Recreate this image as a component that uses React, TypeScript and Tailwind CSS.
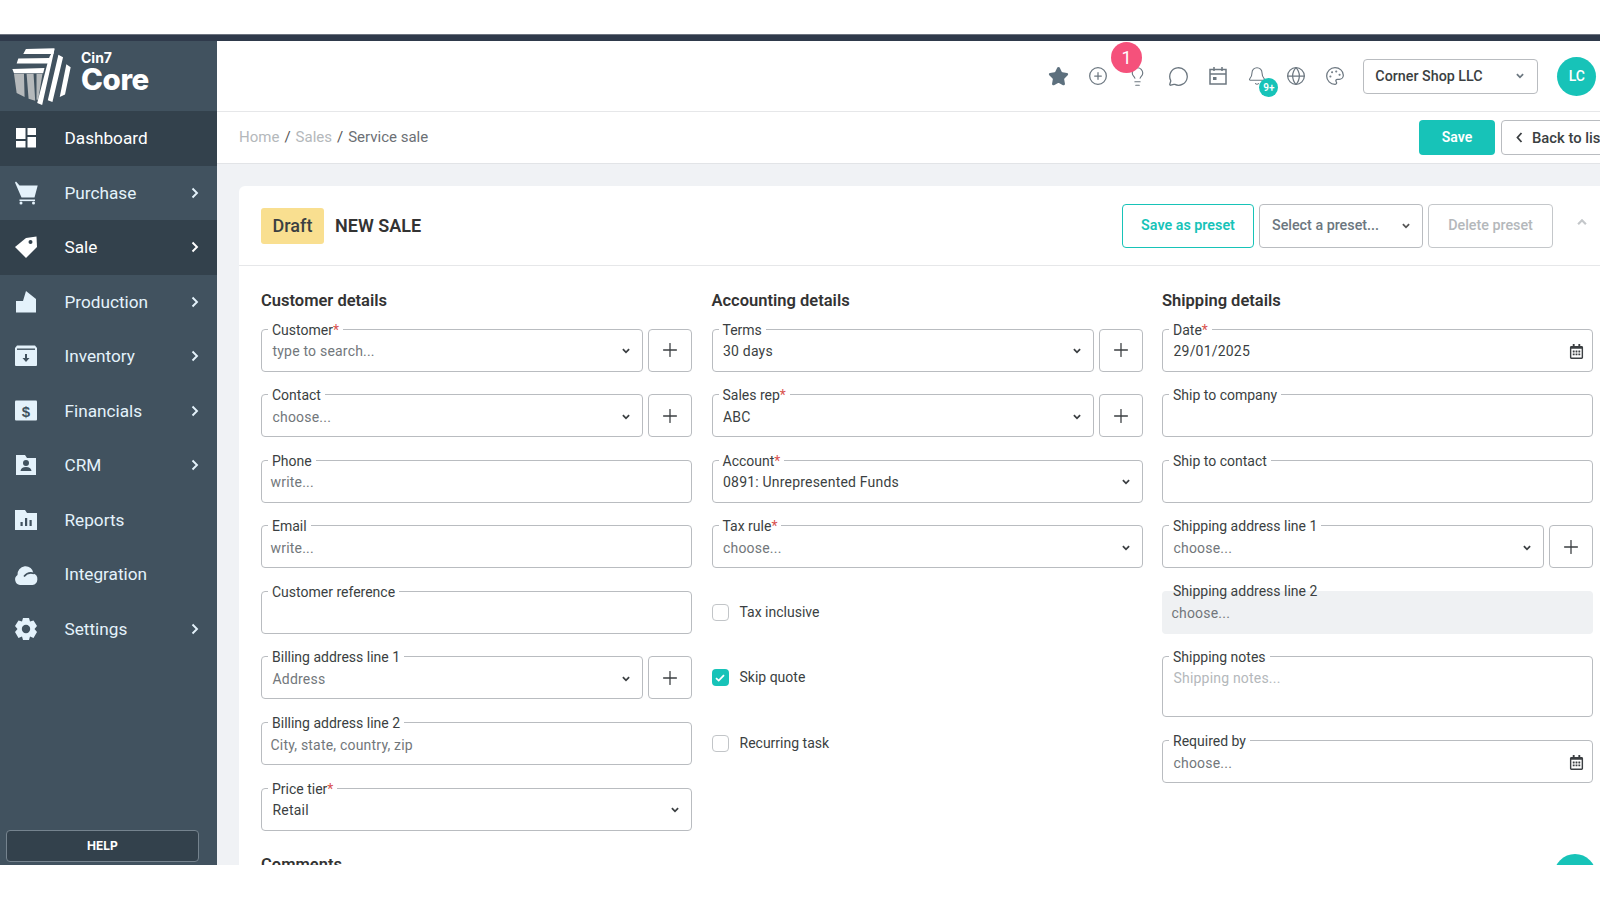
import React from "react";
import { Star, CirclePlus, Lightbulb, MessageCircle, Bell, Globe, Palette, Plus } from "lucide-react";
import { FaRegCalendarAlt } from "react-icons/fa";

const Chev = ({ className = "" }: { className?: string }) => (
  <svg width="8" height="6" viewBox="0 0 9 6" className={className}><polyline points="1,1 4.5,4.5 8,1" fill="none" stroke="currentColor" strokeWidth="2" /></svg>
);

const L = "#e4f2fb";
const D = "#41525f";
const icons: Record<string, React.ReactNode> = {
  Dashboard: (<g fill="#fff"><rect x="2" y="2" width="9.5" height="11" /><rect x="2" y="15" width="9.5" height="6.5" /><rect x="13.5" y="2" width="8.5" height="7" /><rect x="13.5" y="11" width="8.5" height="10.5" /></g>),
  Purchase: (<g fill={L}><path d="M1 1.5 L2 0.5 L5.5 4.5 H23.7 L20.5 16.5 H7.5 Z" /><rect x="5.5" y="18.5" width="15.5" height="1.6" /><circle cx="7" cy="22" r="1.5" /><circle cx="19.5" cy="22" r="1.5" /></g>),
  Sale: (<g><path d="M1 12 L12 3 L22.5 1.5 L23 12 L12 23 Z" fill="#fff" /><circle cx="16.5" cy="7" r="2" fill="#33414c" /></g>),
  Production: (<path d="M2 22.5 V11 H9 L12 1 L22 9 V22.5 Z" fill={L} />),
  Inventory: (<g><path d="M3 1.5 H21 L23 4 V21 Q23 22 22 22 H2 Q1 22 1 21 V4 Z" fill={L} /><rect x="3" y="4.5" width="18" height="1.4" fill={D} /><path d="M11 10 H13 V14 H15.5 L12 18 L8.5 14 H11 Z" fill={D} /></g>),
  Financials: (<g><rect x="1" y="1.5" width="22" height="20" rx="1" fill={L} /><text x="12" y="17.5" textAnchor="middle" fontSize="15" fontWeight="700" fill={D} fontFamily="'Liberation Sans', sans-serif">$</text></g>),
  CRM: (<g><path d="M2 2 H11 L13 5 H22 V22 H2 Z" fill={L} /><circle cx="12" cy="10" r="3" fill={D} /><path d="M6.5 18 Q7 14 12 14 Q17 14 17.5 18 Z" fill={D} /></g>),
  Reports: (<g><path d="M1 2 H11 L13 5 H23 V22 H1 Z" fill={L} /><rect x="6.5" y="14" width="2.2" height="4" fill={D} /><rect x="11" y="10" width="2.2" height="8" fill={D} /><rect x="15.5" y="12" width="2.2" height="6" fill={D} /></g>),
  Integration: (<g><path d="M6 23 A5.5 5.5 0 0 1 3.5 13 A8 8 0 0 1 19.5 11.5 A6 6 0 0 1 18.5 23 Z" fill={L} /><path d="M10 14.5 Q14 9.5 20 11.5" fill="none" stroke={D} strokeWidth="1.6" /></g>),
  Settings: (<g><path d="M9 1 H15 L16 4.5 L19.5 3.5 L23 9 L20.5 12 L23 15 L19.5 21 L16 19.5 L15 23 H9 L8 19.5 L4.5 21 L1 15 L3.5 12 L1 9 L4.5 3.5 L8 4.5 Z" fill={L} strokeLinejoin="round" /><circle cx="12" cy="12" r="4.2" fill={D} /></g>),
};

const nav: [string, boolean][] = [
  ["Dashboard", false], ["Purchase", true], ["Sale", true], ["Production", true], ["Inventory", true],
  ["Financials", true], ["CRM", true], ["Reports", false], ["Integration", false], ["Settings", true],
];

function Field({ label, req, value, ph, select, plus, cal, muted, h, faint, filled }: {
  label: string; req?: boolean; value?: string; ph?: string; select?: boolean; plus?: boolean; cal?: boolean; muted?: boolean; h?: string; faint?: boolean; filled?: boolean;
}) {
  return (
    <div className={`flex gap-[5px] ${h ?? "h-[43px]"}`}>
      <div className={`relative flex-1 rounded-[4px] flex ${filled ? "bg-[#eff1f3] pl-[9.5px]" : "border border-[#b9bcc0]"} ${h ? "items-start pt-[12px]" : "items-center pt-[2px]"} ${select || cal || h ? "pl-[10.5px]" : filled ? "" : "pl-[8.5px]"} ${cal ? "pr-[9px]" : "pr-[11px]"}`}>
        <span className={`absolute -top-[9px] ${filled ? "left-[7px]" : "left-[6px] bg-white"} px-[4px] text-[14px] leading-[18px] text-[#3b3f42] whitespace-nowrap`}>
          {label}{req && <span className="text-[#d9534f]">*</span>}
        </span>
        <span className={`flex-1 text-[14px] leading-[18px] ${faint ? "text-[#b4b8bb]" : muted ? "text-[#72777b]" : "text-[#3b3f42]"} tracking-[0.2px]`}>{value ?? ph}</span>
        {select && <Chev className="text-[#3b3f42] mr-[1px]" />}
        {cal && <FaRegCalendarAlt size={15} className="text-[#3b3f42] -mr-[1px]" />}
      </div>
      {plus && (
        <div className="w-[44px] border border-[#b9bcc0] rounded-[4px] flex items-center justify-center text-[#3b3f42]">
          <Plus size={22} strokeWidth={1.4} />
        </div>
      )}
    </div>
  );
}

function Check({ label, on }: { label: string; on?: boolean }) {
  return (
    <div className="h-[43px] flex items-center gap-[11px]">
      <div className={`w-[17px] h-[17px] rounded-[4px] flex items-center justify-center ${on ? "bg-[#17c3b8]" : "border border-[#c2c5c8]"}`}>
        {on && <svg width="10" height="8" viewBox="0 0 10 8"><polyline points="1,4.2 3.7,6.6 9,1.2" fill="none" stroke="#fff" strokeWidth="1.8" /></svg>}
      </div>
      <span className="text-[14px] text-[#3b3f42]">{label}</span>
    </div>
  );
}

const H = ({ children }: { children: React.ReactNode }) => (
  <div className="text-[16.5px] leading-[20px] font-semibold text-[#333] mb-[18px]">{children}</div>
);

export default function App() {
  return (
    <div className="w-[1600px] h-[900px] overflow-hidden bg-white font-['Roboto',sans-serif]">
      <div className="h-[34px]" />
      <div className="h-[7px] bg-[#2f3a4b] border-t border-[#6d7480]" />
      <div className="h-[824px] flex">
        <aside className="w-[217px] shrink-0 bg-[#41525f] flex flex-col">
          <div className="h-[70px] shrink-0 flex items-center pl-[12px] gap-[10px]">
            <svg width="59" height="57" viewBox="36 140 178 172">
              <path d="M78 143 L164 141 L161 158 L70 158Z M55 172 L149 170 L145 187 L50 187Z M37 203 L134 200 L130 216 L42 216Z" fill="#fff" />
              <path d="M42 218 L72 218 L74 288 L50 276Z M80 218 L101 218 L106 299 L86 293Z M110 218 L128 218 L115 296 L110 296Z" fill="#b5b9bb" />
              <path d="M165 141 L127 312 L112 306 L146 175 L150 165Z M176 160 L190 168 L158 303 L144 298Z M200 189 L213 198 L196 280 L180 288Z" fill="#fff" />
            </svg>
            <div className="text-white -mt-[9px] font-['Inter',sans-serif]">
              <div className="text-[14px] leading-[14px] font-bold">Cin7</div>
              <div className="text-[29.5px] leading-[28px] font-extrabold tracking-[-0.4px]">Core</div>
            </div>
          </div>
          {nav.map(([name, arrow]) => (
            <div key={name} className={`h-[54.5px] shrink-0 flex items-center pl-[14px] pr-[18px] gap-[26.5px] ${name === "Dashboard" || name === "Sale" ? "bg-[#33414c] text-white" : "text-[#e4f2fb]"}`}>
              <svg width="24" height="24" viewBox="0 0 24 24">{icons[name]}</svg>
              <span className="flex-1 text-[17.2px] pt-[2px]">{name}</span>
              {arrow && <svg width="8" height="12" viewBox="0 0 8 12"><polyline points="1.5,1.5 6,6 1.5,10.5" fill="none" stroke="currentColor" strokeWidth="1.9" /></svg>}
            </div>
          ))}
          <div className="mt-auto mb-[3px] mx-[6px] w-[193px] h-[32px] rounded-[4px] bg-[#33414c] border border-[#75838e] flex items-center justify-center text-white text-[12px] font-bold font-['Inter',sans-serif]">HELP</div>
        </aside>

        <div className="relative flex-1 min-w-0 flex flex-col overflow-hidden bg-[#f0f2f5]">
          <header className="h-[71px] shrink-0 bg-white border-b border-[#e6e7e9] flex items-center pl-[831px] text-[#6c7780]">
            <div className="relative flex items-center gap-[19.2px]">
              <Star size={21} fill="#5d707e" stroke="#5d707e" />
              <CirclePlus size={20} strokeWidth={1.5} />
              <Lightbulb size={21} strokeWidth={1.3} />
              <MessageCircle size={21} strokeWidth={1.5} />
              <svg width="20" height="20" viewBox="0 0 20 20" fill="none" stroke="currentColor" strokeWidth="1.5"><rect x="2" y="3.5" width="16" height="14.5" /><path d="M2 8 H18 M6 1 V5 M14 1 V5" /><rect x="5" y="11" width="3.5" height="3" fill="currentColor" stroke="none" /></svg>
              <div className="relative"><Bell size={20} strokeWidth={1.3} />
                <span className="absolute -right-[11.5px] -bottom-[10.5px] w-[19px] h-[19px] rounded-full bg-[#17c3b8] text-white text-[10px] font-semibold flex items-center justify-center">9+</span>
              </div>
              <Globe size={20} strokeWidth={1.5} />
              <Palette size={20} strokeWidth={1.5} />
              <span className="absolute left-[63px] -top-[24px] w-[31px] h-[31px] rounded-full bg-[#f5517b] text-white text-[18px] flex items-center justify-center">1</span>
            </div>
            <div className="ml-[18px] w-[175px] h-[35px] shrink-0 rounded-[4px] border border-[#b9bcc0] flex items-center justify-between pl-[11px] pr-[13px] text-[14.3px] font-medium text-[#3b3f42]">
              <span className="pt-[1px]">Corner Shop LLC</span> <Chev className="text-[#6c7780]" />
            </div>
            <div className="ml-[19px] w-[39px] h-[39px] shrink-0 rounded-full bg-[#17c3b8] text-white text-[14px] font-medium flex items-center justify-center">LC</div>
          </header>

          <div className="h-[52px] shrink-0 bg-white border-b border-[#e2e4e7] flex items-center pl-[22px] text-[15px]">
            <div className="w-[1180px] shrink-0 whitespace-nowrap">
              <span className="text-[#b4b8bb]">Home</span><span className="mx-[5px] text-[#555]">/</span>
              <span className="text-[#b4b8bb]">Sales</span><span className="mx-[5px] text-[#555]">/</span>
              <span className="text-[#6c7075]">Service sale</span>
            </div>
            <div className="w-[76px] h-[35px] rounded-[4px] bg-[#17c3b8] text-white text-[14px] font-semibold flex items-center justify-center shrink-0">Save</div>
            <div className="ml-[6px] w-[140px] h-[35px] shrink-0 rounded-[4px] border border-[#b9bcc0] flex items-center pl-[14px] gap-[9px] text-[#3b3f42] text-[14.8px] font-medium whitespace-nowrap">
              <svg width="7" height="11" viewBox="0 0 7 11"><polyline points="5.5,1 1.5,5.5 5.5,10" fill="none" stroke="currentColor" strokeWidth="1.8" /></svg>
              <span className="pt-[1px]">Back to list</span>
            </div>
          </div>

          <div className="ml-[22px] mt-[22px] w-[1500px] rounded-t-[6px] bg-white shrink-0">
            <div className="h-[80px] border-b border-[#e6e7e9] flex items-center pl-[22px]">
              <span className="w-[63px] h-[36px] rounded-[3px] bg-[#f9df90] text-[#3b3f42] text-[18px] font-medium flex items-center justify-center">Draft</span>
              <span className="ml-[11px] w-[90px] text-[18px] font-semibold text-[#333] whitespace-nowrap">NEW SALE</span>
              <div className="ml-[697px] w-[132px] h-[44px] shrink-0 rounded-[4px] border border-[#17c3b8] text-[#17c3b8] text-[14.3px] font-semibold flex items-center justify-center pt-[1px]">Save as preset</div>
              <div className="ml-[5px] w-[164px] h-[44px] shrink-0 rounded-[4px] border border-[#b9bcc0] text-[#6c7780] text-[14.3px] font-medium flex items-center justify-between pl-[12px] pr-[12px] pt-[1px]">Select a preset... <Chev className="text-[#555]" /></div>
              <div className="ml-[5px] w-[125px] h-[44px] shrink-0 rounded-[4px] border border-[#c4c7ca] text-[#b4b8bb] text-[14.3px] font-medium flex items-center justify-center pt-[1px]">Delete preset</div>
              <Chev className="ml-[25px] -mt-[8px] rotate-180 text-[#c4c7ca] scale-125" />
            </div>

            <div className="pl-[22px] pt-[24.5px]">
              <div className="grid grid-cols-[431px_431px_431px] gap-x-[19.5px]">
                <div>
                  <H>Customer details</H>
                  <div className="flex flex-col gap-[22.6px]">
                    <Field label="Customer" req ph="type to search..." muted select plus />
                    <Field label="Contact" ph="choose..." muted select plus />
                    <Field label="Phone" ph="write..." muted />
                    <Field label="Email" ph="write..." muted />
                    <Field label="Customer reference" />
                    <Field label="Billing address line 1" ph="Address" muted select plus />
                    <Field label="Billing address line 2" ph="City, state, country, zip" muted />
                    <Field label="Price tier" req value="Retail" select />
                  </div>
                </div>
                <div>
                  <H>Accounting details</H>
                  <div className="flex flex-col gap-[22.6px]">
                    <Field label="Terms" value="30 days" select plus />
                    <Field label="Sales rep" req value="ABC" select plus />
                    <Field label="Account" req value="0891: Unrepresented Funds" select />
                    <Field label="Tax rule" req ph="choose..." muted select />
                    <Check label="Tax inclusive" />
                    <Check label="Skip quote" on />
                    <Check label="Recurring task" />
                  </div>
                </div>
                <div>
                  <H>Shipping details</H>
                  <div className="flex flex-col gap-[22.6px]">
                    <Field label="Date" req value="29/01/2025" cal />
                    <Field label="Ship to company" />
                    <Field label="Ship to contact" />
                    <Field label="Shipping address line 1" ph="choose..." muted select plus />
                    <Field label="Shipping address line 2" ph="choose..." muted filled />
                    <Field label="Shipping notes" ph="Shipping notes..." faint h="h-[61px]" />
                    <Field label="Required by" ph="choose..." muted cal />
                  </div>
                </div>
              </div>
              <div className="mt-[24px] text-[16.5px] leading-[20px] font-semibold text-[#333]">Comments</div>
            </div>
          </div>
          <div className="absolute right-[4px] -bottom-[31px] w-[42px] h-[42px] rounded-full bg-[#17c3b8]" />
        </div>
      </div>
    </div>
  );
}
